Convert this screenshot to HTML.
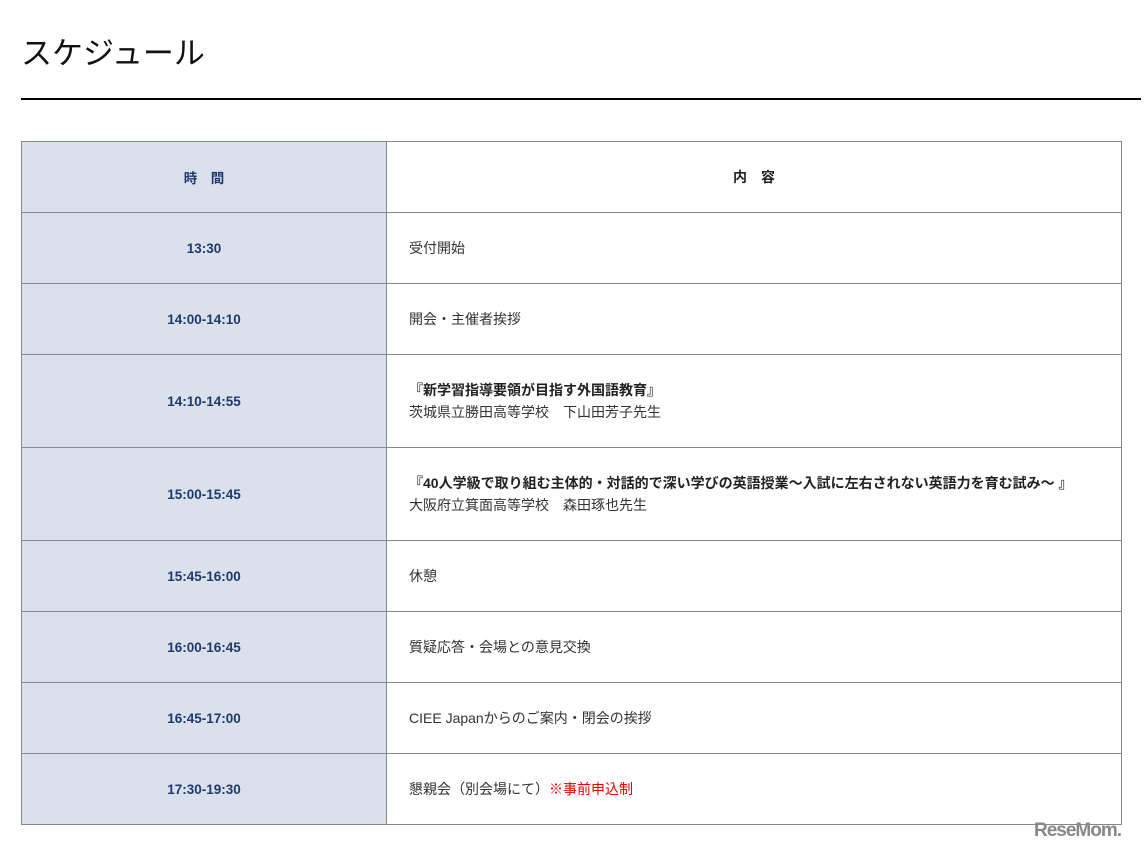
<!DOCTYPE html>
<html><head><meta charset="utf-8"><style>
body{margin:0;background:#fff;font-family:"Liberation Sans","Noto Sans CJK JP",sans-serif;}
h1{position:absolute;left:21px;top:33px;margin:0;font-weight:normal;font-size:31px;line-height:42px;color:#111;}
.rule{position:absolute;left:21px;top:98px;width:1120px;height:2px;background:#000;}
table{position:absolute;left:21px;top:141px;width:1101px;border-collapse:collapse;border:1px solid #333;}
td{border:1px solid #888;font-size:14px;color:#333;}
td.t{width:362px;background:#dbe1ec;text-align:center;font-weight:bold;color:#1d3a6b;font-size:13.5px;}
td.c{padding-left:22px;}
tr{height:71px;}
tr.tall{height:93px;}
.red{color:#e00;}
.logo{position:absolute;left:1034px;top:820px;font-size:19px;font-weight:bold;color:#888;letter-spacing:-1px;}
</style></head><body>
<h1>スケジュール</h1>
<div class="rule"></div>
<table>
<tr><td class="t">時　間</td><td style="text-align:center;font-weight:bold;color:#222">内　容</td></tr>
<tr><td class="t">13:30</td><td class="c">受付開始</td></tr>
<tr><td class="t">14:00-14:10</td><td class="c">開会・主催者挨拶</td></tr>
<tr class="tall"><td class="t">14:10-14:55</td><td class="c" style="line-height:22px"><b style="color:#222">『新学習指導要領が目指す外国語教育』</b><br>茨城県立勝田高等学校　下山田芳子先生</td></tr>
<tr class="tall"><td class="t">15:00-15:45</td><td class="c" style="line-height:22px"><b style="color:#222">『40人学級で取り組む主体的・対話的で深い学びの英語授業～入試に左右されない英語力を育む試み～ 』</b><br>大阪府立箕面高等学校　森田琢也先生</td></tr>
<tr><td class="t">15:45-16:00</td><td class="c">休憩</td></tr>
<tr><td class="t">16:00-16:45</td><td class="c">質疑応答・会場との意見交換</td></tr>
<tr><td class="t">16:45-17:00</td><td class="c">CIEE Japanからのご案内・閉会の挨拶</td></tr>
<tr><td class="t">17:30-19:30</td><td class="c">懇親会（別会場にて）<span class="red">※事前申込制</span></td></tr>
</table>
<div class="logo">ReseMom.</div>
</body></html>
